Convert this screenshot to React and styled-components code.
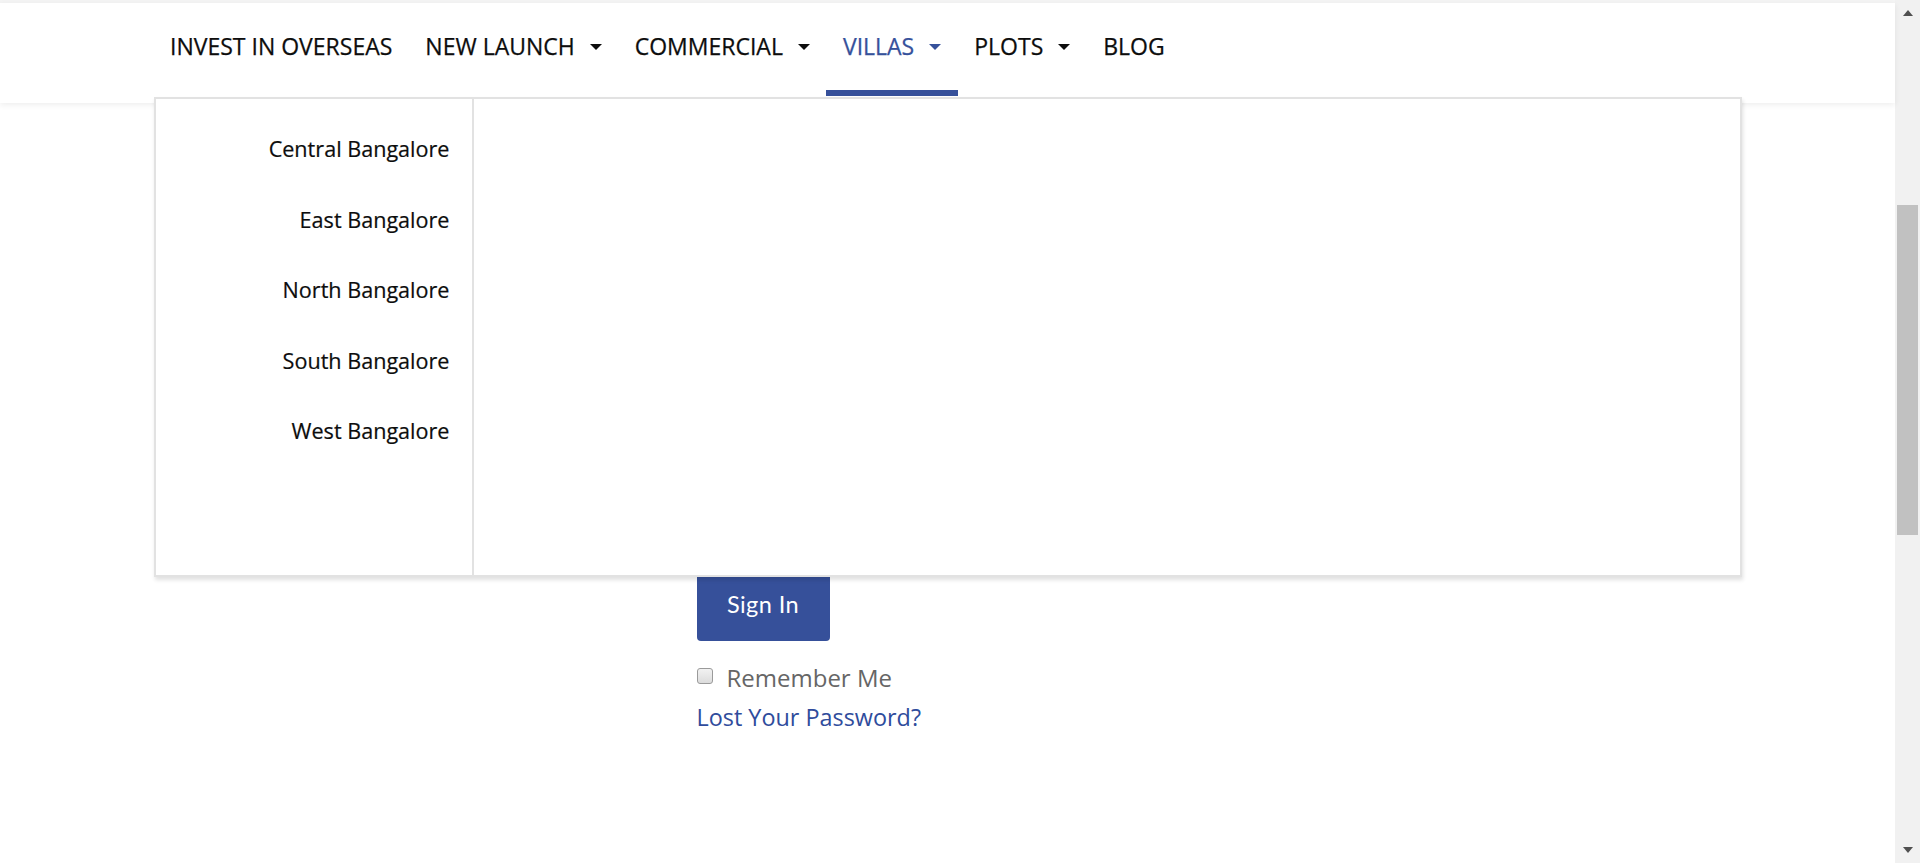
import React from "react";
import styled, { createGlobalStyle } from "styled-components";

const GlobalStyle = createGlobalStyle`
  html, body {
    margin: 0;
    padding: 0;
    height: 100%;
    overflow: hidden;
    background: #ffffff;
    font-family: "Open Sans", "Noto Sans", sans-serif;
  }
  #root {
    height: 100%;
  }
`;

const navItems = [
  { label: "INVEST IN OVERSEAS", caret: false },
  { label: "NEW LAUNCH", caret: true },
  { label: "COMMERCIAL", caret: true },
  { label: "VILLAS", caret: true, active: true },
  { label: "PLOTS", caret: true },
  { label: "BLOG", caret: false },
];

const regions = [
  "Central Bangalore",
  "East Bangalore",
  "North Bangalore",
  "South Bangalore",
  "West Bangalore",
];

const App = () => {
  return (
    <Page>
      <GlobalStyle />
      <Main>
        <TopStrip />
        <Header>
          <Container>
            <Nav>
              {navItems.map((item) => (
                <NavItem key={item.label} $active={item.active}>
                  {item.label}
                  {item.caret && <Caret />}
                </NavItem>
              ))}
            </Nav>
            <MegaMenu>
              <RegionList>
                {regions.map((r) => (
                  <RegionItem key={r}>{r}</RegionItem>
                ))}
              </RegionList>
              <MenuPanel />
            </MegaMenu>
          </Container>
        </Header>
        <Content>
          <Container>
            <LoginForm>
              <SubmitButton>Sign In</SubmitButton>
              <RememberRow>
                <Checkbox type="checkbox" />
                <RememberLabel>Remember Me</RememberLabel>
              </RememberRow>
              <LostLink href="#">Lost Your Password?</LostLink>
            </LoginForm>
          </Container>
        </Content>
      </Main>
      <Scrollbar>
        <ScrollArrow />
        <Track>
          <Thumb />
        </Track>
        <ScrollArrow $down />
      </Scrollbar>
    </Page>
  );
};

const Page = styled.div`
  display: flex;
  flex-direction: row;
  height: 863px;
  width: 1920px;
`
const Main = styled.div`
  flex: 1;
  display: flex;
  flex-direction: column;
  background: #ffffff;
  min-width: 0;
`
const TopStrip = styled.div`
  height: 3px;
  background: #f4f4f4;
`
const Header = styled.header`
  height: 100px;
  background: #ffffff;
  box-shadow: 0 2px 6px rgba(0, 0, 0, 0.07);
  position: relative;
  z-index: 2;
`
const Container = styled.div`
  width: 1588px;
  margin: 0 auto;
  position: relative;
  height: 100%;
`
const Nav = styled.nav`
  display: flex;
  flex-direction: row;
  height: 93px;
`
const NavItem = styled.div`
  display: flex;
  align-items: center;
  padding: 0 16.5px 2px;
  font-size: 23px;
  line-height: 32px;
  color: ${(p) => (p.$active ? "#36519b" : "#0d0d0d")};
  -webkit-text-stroke: 0.25px currentColor;
  border-bottom: 6px solid ${(p) => (p.$active ? "#36509a" : "transparent")};
  cursor: pointer;
  white-space: nowrap;
`
const Caret = styled.span`
  display: inline-block;
  width: 0;
  height: 0;
  margin-left: 15px;
  margin-top: 2px;
  border-left: 6px solid transparent;
  border-right: 6px solid transparent;
  border-top: 6px solid currentColor;
`
const MegaMenu = styled.div`
  position: absolute;
  top: 94px;
  left: 0;
  right: 0;
  height: 480px;
  box-sizing: border-box;
  border: 2px solid #e2e2e2;
  background: #ffffff;
  box-shadow: 1px 3px 4px rgba(0, 0, 0, 0.12);
  display: flex;
  flex-direction: row;
  z-index: 5;
`
const RegionList = styled.div`
  width: 318px;
  box-sizing: border-box;
  border-right: 2px solid #e2e2e2;
  padding: 15px 22px 0 0;
  display: flex;
  flex-direction: column;
  align-items: flex-end;
`
const RegionItem = styled.div`
  font-size: 21.6px;
  line-height: 70.5px;
  color: #0d0d0d;
  -webkit-text-stroke: 0.2px currentColor;
  cursor: pointer;
`
const MenuPanel = styled.div`
  flex: 1;
`
const Content = styled.main`
  flex: 1;
`
const LoginForm = styled.div`
  display: flex;
  flex-direction: column;
  align-items: flex-start;
  margin-left: 543px;
  padding-top: 464px;
`
const SubmitButton = styled.button`
  width: 133px;
  height: 74px;
  padding: 0;
  border: none;
  border-radius: 4px;
  background: #36509a;
  color: #ffffff;
  font-family: "Lato", sans-serif;
  font-size: 23.5px;
  letter-spacing: 0.4px;
  cursor: pointer;
`
const RememberRow = styled.div`
  display: flex;
  align-items: center;
  gap: 14px;
  margin-top: 21px;
`
const Checkbox = styled.input`
  appearance: none;
  margin: 0 0 4px;
  width: 16px;
  height: 16px;
  box-sizing: border-box;
  border: 1px solid #9a9a9a;
  border-radius: 3px;
  background: linear-gradient(#f2f2f2, #dcdcdc);
`
const RememberLabel = styled.span`
  font-size: 24px;
  line-height: 32px;
  color: #666666;
`
const LostLink = styled.a`
  margin-top: 7px;
  font-size: 23.4px;
  line-height: 32px;
  color: #2f4c9c;
  text-decoration: none;
`
const Scrollbar = styled.div`
  width: 25px;
  background: #f1f1f1;
  display: flex;
  flex-direction: column;
  align-items: center;
`
const ScrollArrow = styled.div`
  width: 0;
  height: 0;
  margin: ${(p) => (p.$down ? "6px 0 10px" : "10px 0 6px")};
  border-left: 5.5px solid transparent;
  border-right: 5.5px solid transparent;
  ${(p) =>
    p.$down
      ? "border-top: 6px solid #505050;"
      : "border-bottom: 6px solid #505050;"}
`
const Track = styled.div`
  flex: 1;
  width: 100%;
  display: flex;
  justify-content: center;
  padding-top: 183px;
`
const Thumb = styled.div`
  width: 21px;
  height: 330px;
  background: #c1c1c1;
`

export default App;
